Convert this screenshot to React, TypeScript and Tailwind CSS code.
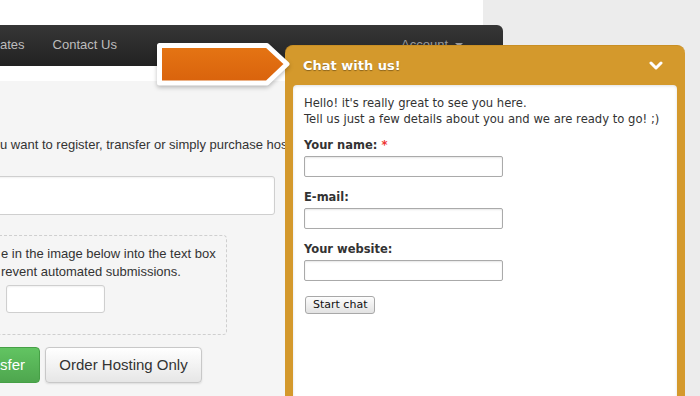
export default function App() {
  return (
    <div className="relative w-[700px] h-[396px] overflow-hidden bg-[#ececec] font-['Liberation_Sans',Arial,sans-serif]">
      <div className="w-[483px] h-full flex flex-col bg-white">
        <div className="h-[25px] shrink-0" />
        <nav className="w-[503px] h-[41px] shrink-0 rounded-tr-[6px] bg-linear-to-b from-[#363636] to-[#222] flex items-center pb-[2px] text-[13px] text-[#bdbdbd]">
          <span className="pr-[14px]">ates</span>
          <span className="px-[14px]">Contact Us</span>
          <span className="ml-auto mr-[40px] text-[#9a9a9a] flex items-center gap-[7px]">
            Account
            <span className="w-0 h-0 border-l-[4px] border-r-[4px] border-t-[4px] border-l-transparent border-r-transparent border-t-[#9a9a9a]" />
          </span>
        </nav>
        <div className="h-[15px] shrink-0 bg-white" />
        <main className="flex-1 bg-[#f5f5f5] pt-[55px] text-[13px] leading-[18px] text-[#333] flex flex-col items-start">
          <p className="whitespace-nowrap">u want to register, transfer or simply purchase hosting</p>
          <div className="mt-[22px] -ml-[10px] w-[285px] h-[39px] bg-white border border-[#cfcfcf] rounded-[3px] shadow-[inset_0_1px_2px_rgba(0,0,0,0.06)]" />
          <div className="mt-[20px] -ml-[20px] w-[247px] h-[100px] border border-dashed border-[#cfcfcf] rounded-[4px] pl-[20px] pt-[9px]">
            <p className="whitespace-nowrap">e in the image below into the text box</p>
            <p className="whitespace-nowrap">revent automated submissions.</p>
            <div className="mt-[4px] ml-[5px] w-[99px] h-[28px] bg-white border border-[#cfcfcf] rounded-[3px] shadow-[inset_0_1px_2px_rgba(0,0,0,0.06)]" />
          </div>
          <div className="mt-[12px] flex gap-[5px]">
            <button className="-ml-[11px] h-[36px] pl-[10px] pr-[14px] rounded-[4px] bg-linear-to-b from-[#62c462] to-[#4ea64e] border border-[#46a046] text-white text-[15px] font-['Liberation_Sans',Arial,sans-serif]">
              sfer
            </button>
            <button className="h-[36px] w-[157px] rounded-[4px] bg-linear-to-b from-[#ffffff] to-[#e6e6e6] border border-[#c8c8c8] shadow-[0_1px_2px_rgba(0,0,0,0.1)] text-[#333] text-[15px] font-['Liberation_Sans',Arial,sans-serif]">
              Order Hosting Only
            </button>
          </div>
        </main>
      </div>

      <div className="absolute left-[285px] top-[45px] w-[400px] h-[360px] rounded-t-[8px] bg-[#d4992c] border-t border-[#c98f24] flex flex-col font-['DejaVu_Sans',sans-serif]">
        <div className="h-[39px] shrink-0 flex items-center pl-[18px] pr-[22px]">
          <span className="text-white font-bold text-[13px] [text-shadow:0_1px_1px_rgba(0,0,0,0.35)]">Chat with us!</span>
          <svg className="ml-auto" width="14" height="9" viewBox="0 0 14 9">
            <polyline points="2,2 7,7 12,2" fill="none" stroke="white" strokeWidth="3" strokeLinecap="round" strokeLinejoin="round" />
          </svg>
        </div>
        <div className="flex-1 mx-[8px] bg-white rounded-t-[4px] px-[11px] pt-[10px] text-[11px] leading-[16px] text-[#333] shadow-[inset_0_1px_3px_rgba(0,0,0,0.12)]">
          <p className="text-[11.6px]">Hello! it's really great to see you here.</p>
          <p className="text-[11.6px]">Tell us just a few details about you and we are ready to go! ;)</p>
          <label className="block mt-[10px] font-bold text-[11.5px]">
            Your name: <span className="text-[#e33]">*</span>
          </label>
          <div className="mt-[3px] w-[199px] h-[21px] border border-[#aaa] rounded-[2px] shadow-[inset_0_1px_2px_rgba(0,0,0,0.1)]" />
          <label className="block mt-[12px] font-bold text-[11.5px]">E-mail:</label>
          <div className="mt-[3px] w-[199px] h-[21px] border border-[#aaa] rounded-[2px] shadow-[inset_0_1px_2px_rgba(0,0,0,0.1)]" />
          <label className="block mt-[12px] font-bold text-[11.5px]">Your website:</label>
          <div className="mt-[3px] w-[199px] h-[21px] border border-[#aaa] rounded-[2px] shadow-[inset_0_1px_2px_rgba(0,0,0,0.1)]" />
          <button className="mt-[15px] ml-[1px] h-[18px] px-[7px] rounded-[3px] border border-[#a8a8a8] bg-linear-to-b from-[#fdfdfd] to-[#e2e2e2] text-[11px] leading-[16px] text-[#111]">
            Start chat
          </button>
        </div>
      </div>

      <svg className="absolute left-[150px] top-[38px] [filter:drop-shadow(0_2px_2px_rgba(0,0,0,0.25))]" width="145" height="56" viewBox="0 0 145 56">
        <defs>
          <linearGradient id="arr" x1="0" y1="0" x2="0" y2="1">
            <stop offset="0" stopColor="#e57514" />
            <stop offset="1" stopColor="#d9620c" />
          </linearGradient>
        </defs>
        <polygon points="9.5,7.5 117,7.5 137,26 117,45 9.5,45" fill="url(#arr)" stroke="white" strokeWidth="5" strokeLinejoin="round" />
      </svg>
    </div>
  );
}
